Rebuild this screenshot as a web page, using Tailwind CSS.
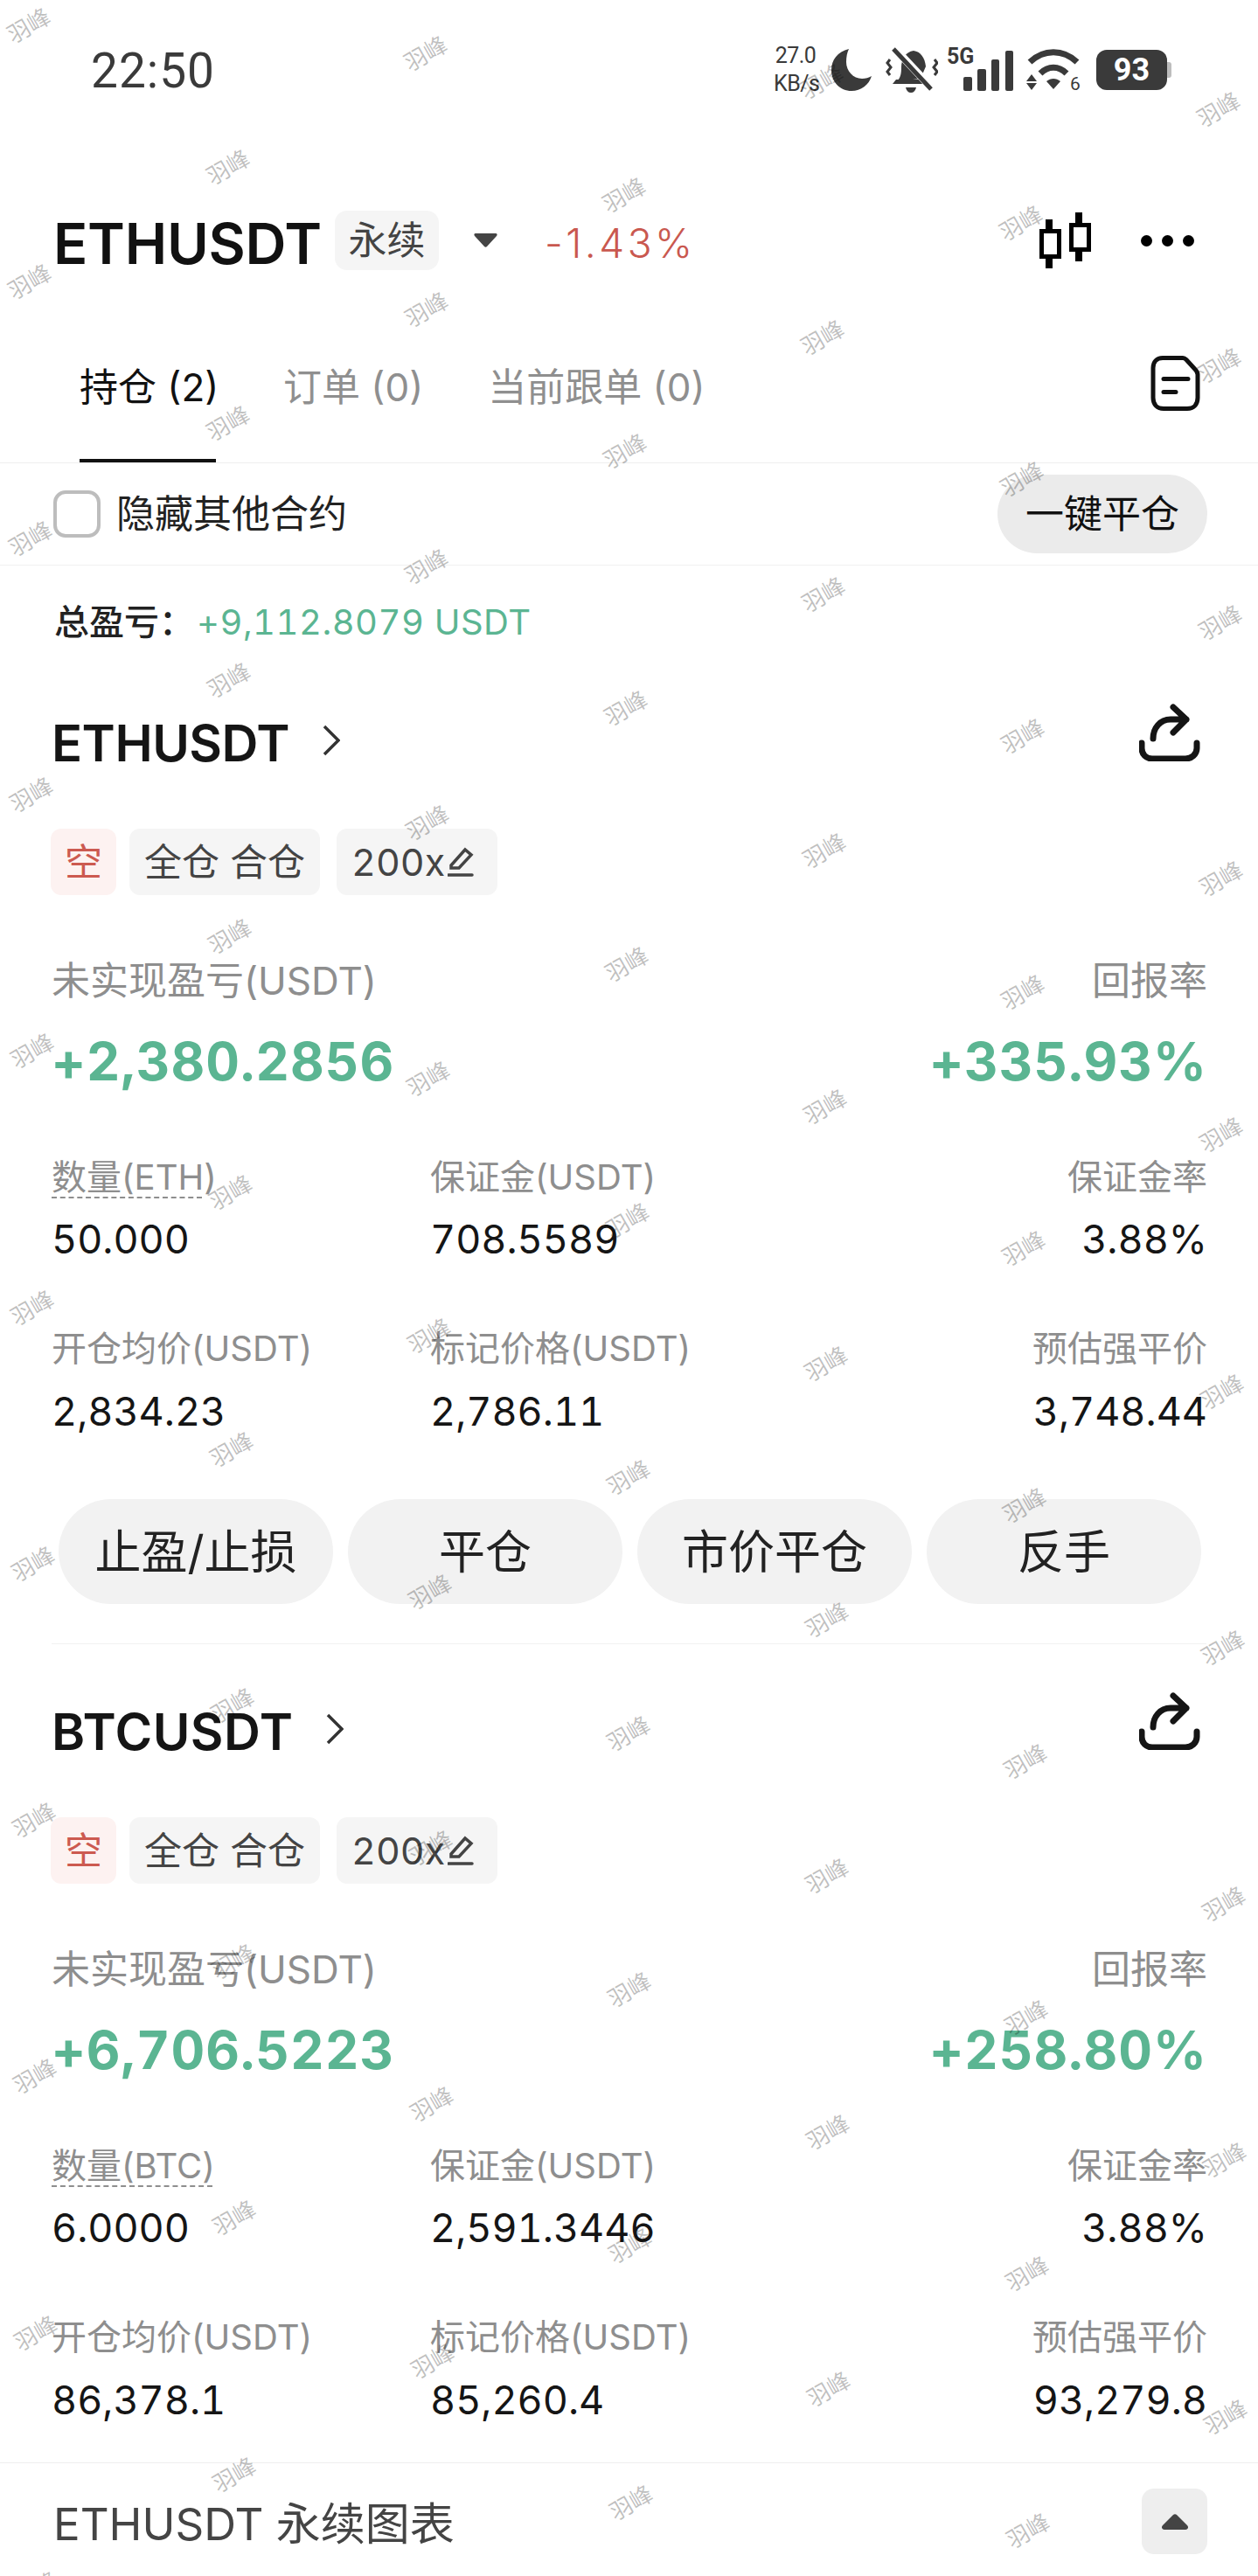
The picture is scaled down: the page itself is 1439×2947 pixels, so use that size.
<!DOCTYPE html>
<html lang="zh-CN">
<head>
  <meta charset="UTF-8" />
  <meta name="viewport" content="width=device-width, initial-scale=1.0" />
  <title>ETHUSDT 持仓</title>
  <script src="https://cdn.jsdelivr.net/npm/@tailwindcss/browser@4"></script>
</head>
<body class="bg-white">
  <div id="pagina" class="relative w-[1439px] h-[2947px] overflow-hidden bg-white font-[Inter,'Noto_Sans_CJK_SC',sans-serif]">

    <!-- Status bar -->
    <div class="flex justify-between items-center h-[160px] pl-[104px] pr-[99px] text-[#3a3a3a]">
      <span class="mt-[2px] font-['Roboto'] text-[55px] leading-none tracking-[1px]">22:50</span>
      <div class="flex items-center">
        <div class="w-[50px] font-['Roboto'] text-[25px] leading-[32px] text-center tracking-[-0.5px]">27.0<br />KB/s</div>
        <svg class="ml-[16px]" width="46" height="48" viewBox="0 0 46 48" fill="#3a3a3a"><path d="M20 0C7 3 0 13 0 24c0 14 10 24 23 24 11 0 20-7 23-17-3 2-7 3-11 3C25 34 17 25 17 15c0-6 1-11 3-15z"/></svg>
        <svg class="ml-[16px]" width="60" height="52" viewBox="0 0 60 52" fill="none"><path d="M14 38c4-4 5-8 5-16 0-9 5-18 14-19 8 1 13 8 14 18l-6 14z" fill="#3a3a3a" transform="translate(-1 1)"/><path d="M8 42h38l-4-5H12z" fill="#3a3a3a"/><path d="M23 46h12c-1 4-3 6-6 6s-5-2-6-6z" fill="#3a3a3a"/><path d="M10 1l45 48" stroke="#fff" stroke-width="9"/><path d="M9 2l43 46" stroke="#3a3a3a" stroke-width="5"/><path d="M5 14l-3 4 4 5-4 5 3 4M56 14l3 4-4 5 4 5-3 4" stroke="#3a3a3a" stroke-width="3"/></svg>
        <div class="relative ml-[10px] w-[76px] h-[50px]">
          <span class="absolute left-0 top-[-2px] font-['Roboto'] text-[25px] font-bold leading-[24px]">5G</span>
          <svg class="absolute left-0 top-0" width="76" height="50" viewBox="0 0 76 50" fill="#3a3a3a"><rect x="19" y="33" width="10" height="16" rx="2"/><rect x="35" y="24" width="10" height="25" rx="2"/><rect x="51" y="13" width="9" height="36" rx="2"/><rect x="67" y="3" width="9" height="46" rx="2"/></svg>
        </div>
        <svg class="ml-[15px]" width="62" height="48" viewBox="0 0 62 48" fill="none"><path d="M4 15C20 0 42 0 58 15" stroke="#3a3a3a" stroke-width="7"/><path d="M16 28c9-9 21-9 30 0" stroke="#3a3a3a" stroke-width="7"/><path d="M23 37c5-4 11-4 16 0l-8 9z" fill="#3a3a3a"/><path d="M6 29l6 8H0zM6 47l-6-8h12z" fill="#3a3a3a"/><text x="50" y="47" font-size="21" fill="#3a3a3a" font-family="Roboto">6</text></svg>
        <div class="flex items-center ml-[18px]">
          <div class="flex justify-center items-center w-[81px] h-[46px] rounded-[12px] bg-[#3a3a3a] font-['Roboto'] text-[36px] font-bold text-white">93</div>
          <div class="w-[5px] h-[18px] rounded-r-[3px] bg-[#bdbdbd]"></div>
        </div>
      </div>
    </div>

    <!-- Header -->
    <div class="flex items-center h-[230px] pl-[61px] pr-[73px]">
      <span class="mt-[6px] text-[65px] font-semibold leading-none tracking-[-0.25px] text-[#111]">ETHUSDT</span>
      <span class="flex justify-center items-center w-[119px] h-[68px] ml-[15px] rounded-[14px] bg-[#f5f5f5] text-[44px] text-[#444]">永续</span>
      <svg class="ml-[40px]" width="27" height="16" viewBox="0 0 27 16" fill="#444"><path d="M2 0h23c2 0 2 2 1 3L15 15c-1 1-2 1-3 0L1 3C0 2 0 0 2 0z"/></svg>
      <span class="mt-[6px] ml-[54px] text-[46px] font-light leading-none tracking-[3.5px] text-[#c9584f]">-1.43%</span>
      <div class="flex items-center ml-auto">
        <svg width="60" height="64" viewBox="0 0 60 64" fill="none" stroke="#000"><path d="M11 8v56M45 0v56" stroke-width="8"/><rect x="2.5" y="21.5" width="20" height="29" fill="#fff" stroke-width="5"/><rect x="36.5" y="14.5" width="20" height="28" fill="#fff" stroke-width="5"/></svg>
        <div class="flex gap-[11px] ml-[56px]">
          <span class="w-[13px] h-[13px] rounded-full bg-black"></span>
          <span class="w-[13px] h-[13px] rounded-full bg-black"></span>
          <span class="w-[13px] h-[13px] rounded-full bg-black"></span>
        </div>
      </div>
    </div>

    <!-- Tabs -->
    <div class="flex h-[140px] pl-[91px] pr-[66px] border-b border-[#eeeeee] text-[44px] leading-[58px]">
      <div class="w-[156px] h-[139px] pt-[24px] border-b-4 border-[#111] text-[#111] whitespace-nowrap">持仓 (2)</div>
      <div class="ml-[77px] pt-[24px] text-[#8f8f8f] whitespace-nowrap">订单 (0)</div>
      <div class="ml-[74px] pt-[24px] text-[#8f8f8f] whitespace-nowrap">当前跟单 (0)</div>
      <svg class="ml-auto mt-[17px]" width="57" height="63" viewBox="0 0 57 63" fill="none" stroke="#111" stroke-width="5"><path d="M14 2.5h23c2 0 3 1 4 2l10 11c2 2 3 3 3 6V48c0 8-5 12.500-12 12.500H15C8 60.500 3 56 3 48V14C3 7 7 2.500 14 2.500z"/><path d="M15 26.500h28M15 41.500h14" stroke-linecap="round"/></svg>
    </div>

    <!-- Hide other contracts -->
    <div class="flex items-center h-[117px] pl-[61px] pr-[58px] border-b border-[#f0f0f0]">
      <span class="w-[54px] h-[54px] rounded-[14px] border-4 border-[#bdbdbd]"></span>
      <span class="ml-[18px] text-[44px] leading-none text-[#222]">隐藏其他合约</span>
      <button class="flex justify-center items-center w-[240px] h-[90px] ml-auto rounded-full bg-[#ebebeb] text-[44px] text-[#111]">一键平仓</button>
    </div>

    <!-- Total PnL -->
    <div class="flex items-center h-[130px] pl-[62px] text-[40px] leading-none">
      <span class="font-medium text-[#222]">总盈亏：</span>
      <span class="ml-[3px] tabular-nums tracking-[0.5px] text-[#5bb592]">+9,112.8079 USDT</span>
    </div>

    <!-- ETH position -->
    <section class="pl-[59px] pr-[58px]">
      <div class="flex items-center h-[146px]">
        <span class="text-[58px] font-semibold leading-none tracking-[-0.5px] text-[#151515]">ETHUSDT</span>
        <svg class="ml-[38px] mb-[6px]" width="20" height="36" viewBox="0 0 20 36" fill="none" stroke="#333" stroke-width="3.500"><path d="M2 2l16 16L2 34"/></svg>
        <svg class="ml-auto mr-[8px] mb-[24px]" width="70" height="66" viewBox="0 0 70 66" fill="none" stroke="#151515" stroke-width="7" stroke-linecap="round" stroke-linejoin="round"><path d="M16 40c0-12 8-22 20-22h18M39 4l15 14-15 15"/><path d="M3 45v6c0 7 5 12 12 12h38c7 0 13-5 13-12v-6"/></svg>
      </div>
      <div class="flex mt-[25px] h-[76px] text-[43px]">
        <span class="flex justify-center items-center w-[75px] -ml-[1px] rounded-[12px] bg-[#fdf2f1] text-[#cc5a50]">空</span>
        <span class="flex justify-center items-center w-[218px] ml-[15px] rounded-[12px] bg-[#f5f5f5] text-[#444]">全仓 合仓</span>
        <span class="flex items-center w-[184px] ml-[19px] pl-[17px] rounded-[12px] bg-[#f5f5f5] tabular-nums text-[#444]">200x<svg class="ml-[3px]" width="30" height="34" viewBox="0 0 30 34" fill="none" stroke="#444" stroke-width="3.500" stroke-linecap="round"><path d="M4 21L20 3l7 6-14 15H4zM1 32h27"/></svg></span>
      </div>

      <div class="flex justify-between mt-[70px] text-[44px] leading-[56px] text-[#8e8e8e]">
        <span>未实现盈亏(USDT)</span>
        <span>回报率</span>
      </div>
      <div class="flex justify-between mt-[28px] text-[60px] font-bold leading-[72px] tabular-nums tracking-[1px] text-[#5bb592]">
        <span>+2,380.2856</span>
        <span>+335.93%</span>
      </div>

      <div class="grid grid-cols-[433px_1fr_auto] mt-[69px] leading-[56px]">
        <div class="text-[40px] text-[#8e8e8e]"><div class="w-[172px] h-[52px] whitespace-nowrap border-b-2 border-dashed border-[#8e8e8e]">数量(ETH)</div></div>
        <div class="text-[40px] text-[#8e8e8e]">保证金(USDT)</div>
        <div class="text-[40px] text-right text-[#8e8e8e]">保证金率</div>
        <div class="mt-[15px] text-[45px] tabular-nums text-[#151515]">50.000</div>
        <div class="mt-[15px] text-[45px] tabular-nums text-[#151515]">708.5589</div>
        <div class="mt-[15px] text-[45px] text-right tabular-nums text-[#151515]">3.88%</div>
        <div class="mt-[69px] text-[40px] text-[#8e8e8e]">开仓均价(USDT)</div>
        <div class="mt-[69px] text-[40px] text-[#8e8e8e]">标记价格(USDT)</div>
        <div class="mt-[69px] text-[40px] text-right text-[#8e8e8e]">预估强平价</div>
        <div class="mt-[16px] text-[45px] tabular-nums text-[#151515]">2,834.23</div>
        <div class="mt-[16px] text-[45px] tabular-nums text-[#151515]">2,786.11</div>
        <div class="mt-[16px] text-[45px] text-right tabular-nums text-[#151515]">3,748.44</div>
      </div>
    </section>

    <div class="flex gap-[17px] mt-[72px] pl-[67px] text-[53px] text-[#222]">
      <button class="w-[314px] h-[120px] pt-[3px] rounded-full bg-[#f2f2f2]">止盈/止损</button>
      <button class="w-[314px] h-[120px] pt-[3px] rounded-full bg-[#f2f2f2]">平仓</button>
      <button class="w-[314px] h-[120px] pt-[3px] rounded-full bg-[#f2f2f2]">市价平仓</button>
      <button class="w-[314px] h-[120px] pt-[3px] rounded-full bg-[#f2f2f2]">反手</button>
    </div>
    <div class="h-px mt-[45px] mx-[59px] bg-[#f2f2f2]"></div>

    <!-- BTC position -->
    <section class="mt-[27px] pl-[59px] pr-[58px]">
      <div class="flex items-center h-[146px]">
        <span class="text-[58px] font-semibold leading-none tracking-[0.5px] text-[#151515]">BTCUSDT</span>
        <svg class="ml-[38px] mb-[6px]" width="20" height="36" viewBox="0 0 20 36" fill="none" stroke="#333" stroke-width="3.500"><path d="M2 2l16 16L2 34"/></svg>
        <svg class="ml-auto mr-[8px] mb-[24px]" width="70" height="66" viewBox="0 0 70 66" fill="none" stroke="#151515" stroke-width="7" stroke-linecap="round" stroke-linejoin="round"><path d="M16 40c0-12 8-22 20-22h18M39 4l15 14-15 15"/><path d="M3 45v6c0 7 5 12 12 12h38c7 0 13-5 13-12v-6"/></svg>
      </div>
      <div class="flex mt-[25px] h-[76px] text-[43px]">
        <span class="flex justify-center items-center w-[75px] -ml-[1px] rounded-[12px] bg-[#fdf2f1] text-[#cc5a50]">空</span>
        <span class="flex justify-center items-center w-[218px] ml-[15px] rounded-[12px] bg-[#f5f5f5] text-[#444]">全仓 合仓</span>
        <span class="flex items-center w-[184px] ml-[19px] pl-[17px] rounded-[12px] bg-[#f5f5f5] tabular-nums text-[#444]">200x<svg class="ml-[3px]" width="30" height="34" viewBox="0 0 30 34" fill="none" stroke="#444" stroke-width="3.500" stroke-linecap="round"><path d="M4 21L20 3l7 6-14 15H4zM1 32h27"/></svg></span>
      </div>

      <div class="flex justify-between mt-[70px] text-[44px] leading-[56px] text-[#8e8e8e]">
        <span>未实现盈亏(USDT)</span>
        <span>回报率</span>
      </div>
      <div class="flex justify-between mt-[28px] text-[60px] font-bold leading-[72px] tabular-nums tracking-[1px] text-[#5bb592]">
        <span>+6,706.5223</span>
        <span>+258.80%</span>
      </div>

      <div class="grid grid-cols-[433px_1fr_auto] mt-[69px] leading-[56px]">
        <div class="text-[40px] text-[#8e8e8e]"><div class="w-[184px] h-[52px] whitespace-nowrap border-b-2 border-dashed border-[#8e8e8e]">数量(BTC)</div></div>
        <div class="text-[40px] text-[#8e8e8e]">保证金(USDT)</div>
        <div class="text-[40px] text-right text-[#8e8e8e]">保证金率</div>
        <div class="mt-[15px] text-[45px] tabular-nums text-[#151515]">6.0000</div>
        <div class="mt-[15px] text-[45px] tabular-nums text-[#151515]">2,591.3446</div>
        <div class="mt-[15px] text-[45px] text-right tabular-nums text-[#151515]">3.88%</div>
        <div class="mt-[69px] text-[40px] text-[#8e8e8e]">开仓均价(USDT)</div>
        <div class="mt-[69px] text-[40px] text-[#8e8e8e]">标记价格(USDT)</div>
        <div class="mt-[69px] text-[40px] text-right text-[#8e8e8e]">预估强平价</div>
        <div class="mt-[16px] text-[45px] tabular-nums text-[#151515]">86,378.1</div>
        <div class="mt-[16px] text-[45px] tabular-nums text-[#151515]">85,260.4</div>
        <div class="mt-[16px] text-[45px] text-right tabular-nums text-[#151515]">93,279.8</div>
      </div>
    </section>

    <!-- Chart footer -->
    <div class="flex justify-between items-start mt-[43px] pt-[29px] pl-[61px] pr-[58px] border-t border-[#eeeeee]">
      <span class="mt-[11px] text-[51px] leading-[60px] text-[#444]">ETHUSDT 永续图表</span>
      <button class="flex justify-center items-center w-[75px] h-[75px] rounded-[14px] bg-[#eeeeee]">
        <svg width="30" height="18" viewBox="0 0 30 18" fill="#444"><path d="M13 1c1-1 3-1 4 0l12 12c2 2 1 5-2 5H3c-3 0-4-3-2-5z"/></svg>
      </button>
    </div>

    <div id="marcas" class="absolute inset-0 pointer-events-none"></div>
  </div>

  <script>
    // watermark repeats on two staggered rows
    const marcas = document.getElementById("marcas");

    function agregarMarca(x, y) {
      const m = document.createElement("span");
      m.className = "absolute -translate-x-1/2 -translate-y-1/2 rotate-[-30deg] whitespace-nowrap font-['Noto_Sans_CJK_SC'] text-[26px] leading-none text-black/25";
      m.style.left = (x + y * 0.003) + "px";
      m.style.top = y + "px";
      m.textContent = "羽峰";
      marcas.appendChild(m);
    }

    for (let fila = 0; fila < 11; fila++) {
      for (let col = 0; col < 4; col++) {
        agregarMarca(32 + col * 453.5, 28 + fila * 293.3 + col * 32);
      }
      for (let col = 0; col < 3; col++) {
        agregarMarca(259 + col * 453.5, 190 + fila * 293.3 + col * 32);
      }
    }
  </script>
</body>
</html>
